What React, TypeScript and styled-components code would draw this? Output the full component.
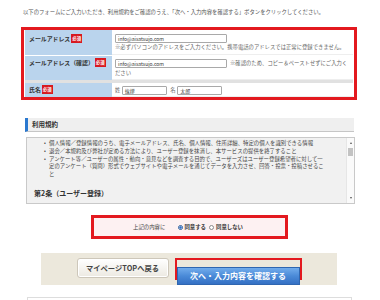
import React from "react";
import styled, { createGlobalStyle } from "styled-components";

const GlobalStyle = createGlobalStyle`
  html, body { margin: 0; padding: 0; background: #ffffff; }
  body { font-family: "Noto Sans CJK JP", "Noto Sans", sans-serif; }
  * { box-sizing: border-box; }
`;

const Page = styled.div`
  width: 380px;
  height: 300px;
  overflow: hidden;
  padding: 8px 23px 0 21px;
  font-family: "Noto Sans CJK JP", "Noto Sans", sans-serif;
`;

const Lead = styled.p`
  margin: 0 0 0 2px;
  font-size: 5.35px;
  line-height: 8px;
  color: #555;
  white-space: nowrap;
`;

const FormFrame = styled.div`
  margin-top: 11px;
  border: 3px solid #e3191f;
  padding: 0 1px;
  background: #fff;
`;

const FormRow = styled.div<{ $h: number; $sep?: "white" | "gray" }>`
  display: grid;
  grid-template-columns: 87px 1fr;
  height: ${(p) => p.$h}px;
  border-top: ${(p) =>
    p.$sep === "white" ? "1px solid #ffffff" : p.$sep === "gray" ? "3px solid #e1e1e1" : "none"};
`;

const LabelCell = styled.div<{ $pt: number }>`
  background: #bad4ed;
  padding: ${(p) => p.$pt}px 0 0 4px;
  font-size: 5.9px;
  font-weight: 700;
  line-height: 9px;
  color: #333;
  white-space: nowrap;
`;

const Badge = styled.span`
  display: inline-block;
  vertical-align: top;
  margin-left: 1px;
  height: 9px;
  padding: 0 1px;
  background: #d71920;
  color: #fff;
  font-size: 4.4px;
  line-height: 9px;
  font-weight: 700;
`;

const ValueCell = styled.div<{ $pt: number }>`
  background: #fff;
  padding: ${(p) => p.$pt}px 4px 0 3px;
  font-size: 5.35px;
  color: #666;
  border-bottom: 1px solid #eeeeee;
  line-height: 10px;
`;

const TextInput = styled.span<{ $w: number }>`
  display: inline-block;
  vertical-align: middle;
  width: ${(p) => p.$w}px;
  height: 9px;
  border: 1px solid #a9a9a9;
  border-radius: 1px;
  padding: 0 2px;
  background: #fff;
  font-size: 5px;
  line-height: 7px;
  color: #333;
  white-space: nowrap;
  overflow: hidden;
`;

const BlockInput = styled(TextInput)`
  display: block;
`;

const BlockNote = styled.div`
  margin-top: 1px;
  line-height: 7px;
  white-space: nowrap;
`;

const NameInput = styled(TextInput)`
  margin: 0 3.5px 0 1.5px;
`;

const InlineInput = styled(TextInput)`
  margin-right: 3px;
`;

const TermsHeader = styled.div`
  margin: 18px 3px 0 4px;
  height: 14px;
  background: #efefef;
  border-left: 3px solid #2a78cf;
  border-bottom: 1px solid #c6c6c6;
  padding-left: 4px;
  font-size: 6.5px;
  font-weight: 700;
  line-height: 13px;
  color: #333;
`;

const TermsBox = styled.div`
  margin: 5px 2px 0 5px;
  height: 67px;
  border: 1px solid #c9c9c9;
  background: #f1f1f1;
  display: flex;
  overflow: hidden;
`;

const TermsContent = styled.div`
  flex: 1;
  padding: 1.5px 0 0 7px;
  overflow: hidden;
`;

const TermsList = styled.ul`
  list-style: none;
  margin: 0 0 0 10px;
  padding: 0;
`;

const TermsItem = styled.li`
  display: flex;
  margin-bottom: 0.5px;
  font-size: 5.4px;
  line-height: 7.5px;
  color: #444;
`;

const Bullet = styled.span`
  flex: none;
  width: 5px;
`;

const TermsText = styled.span`
  width: 278px;
`;

const ArticleTitle = styled.h3`
  margin: 10px 0 0;
  font-size: 7px;
  line-height: 10px;
  font-weight: 700;
  color: #333;
`;

const ScrollBar = styled.div`
  flex: none;
  width: 8px;
  background: #fafafa;
  border-left: 1px solid #e6e6e6;
  display: flex;
  flex-direction: column;
  align-items: center;
  padding: 4px 0;
`;

const Arrow = styled.span<{ $up?: boolean }>`
  width: 0;
  height: 0;
  border-left: 1.5px solid transparent;
  border-right: 1.5px solid transparent;
  ${(p) => (p.$up ? "border-bottom: 2px solid #555;" : "border-top: 2px solid #555;")}
`;

const Thumb = styled.span`
  margin-top: 4px;
  width: 5px;
  height: 8px;
  background: #c3c3c3;
`;

const Spacer = styled.span`
  flex: 1;
`;

const AgreeBox = styled.div`
  margin: 11px auto 0;
  width: 197px;
  height: 24px;
  border: 3px solid #e3191f;
  background: #fdf1f2;
  display: flex;
  align-items: center;
  justify-content: center;
  font-size: 5.4px;
  color: #444;
  padding-right: 2px;
`;

const AgreeLabel = styled.span`
  margin-right: 12.5px;
`;

const Radio = styled.span<{ $checked?: boolean }>`
  display: inline-block;
  width: 5px;
  height: 5px;
  border-radius: 50%;
  border: 1px solid ${(p) => (p.$checked ? "#2f5f9a" : "#8a8a8a")};
  background: ${(p) => (p.$checked ? "radial-gradient(circle, #2b6fd0 0 45%, #ffffff 55%)" : "#ffffff")};
  margin-right: 1.5px;
`;

const RadioText = styled.span<{ $gap?: number }>`
  font-weight: 700;
  color: #333;
  margin-right: ${(p) => p.$gap ?? 0}px;
`;

const ButtonBar = styled.div`
  margin: 14px auto 0;
  width: 296px;
  height: 32px;
  background: #ece8dc;
  display: flex;
  justify-content: center;
  align-items: flex-start;
  gap: 6px;
  padding-top: 5px;
`;

const BackButton = styled.button`
  width: 92px;
  height: 20px;
  padding: 0;
  border: 1px solid #cdc7ba;
  border-radius: 3px;
  background: linear-gradient(#ffffff, #ece9e1);
  box-shadow: inset 0 0 0 1px #ffffff;
  font-family: "Noto Sans CJK JP", "Noto Sans", sans-serif;
  font-size: 7.3px;
  font-weight: 700;
  color: #444;
`;

const NextFrame = styled.div`
  width: 127px;
  height: 22px;
  border: 2px solid #e3191f;
`;

const NextButton = styled.button`
  width: 100%;
  height: 100%;
  padding: 0;
  border: 1px solid #2f66b0;
  background: linear-gradient(#72acec, #4a8ad8 50%, #3470c4);
  font-family: "Noto Sans CJK JP", "Noto Sans", sans-serif;
  font-size: 8px;
  font-weight: 700;
  color: #ffffff;
`;

const BottomBox = styled.div`
  margin: 12px 5px 0 6px;
  height: 20px;
  border: 1px solid #dddddd;
  border-bottom: none;
`;

const terms = [
  "個人情報／登録情報のうち、電子メールアドレス、氏名、個人情報、住所詳細、特定の個人を識別できる情報",
  "退会／本規約及び弊社が定める方法により、ユーザー登録を抹消し、本サービスの提供を終了すること",
  "アンケート等／ユーザーの属性・動向・意見などを調査する目的で、ユーザーズはユーザー登録希望者に対して一定のアンケート（質問）形式でウェブサイトや電子メールを通じてデータを入力させ、回答・投票・投稿させること",
];

export default function App() {
  return (
    <>
      <GlobalStyle />
      <Page>
        <Lead>
          以下のフォームにご入力いただき、利用規約をご確認のうえ、「次へ・入力内容を確認する」ボタンをクリックしてください。
        </Lead>

        <FormFrame>
          <FormRow $h={25}>
            <LabelCell $pt={4}>
              メールアドレス<Badge>必須</Badge>
            </LabelCell>
            <ValueCell $pt={4}>
              <BlockInput $w={112}>info@aisatsujo.com</BlockInput>
              <BlockNote>
                ※必ずパソコンのアドレスをご入力ください。携帯電話のアドレスでは正常に登録できません。
              </BlockNote>
            </ValueCell>
          </FormRow>
          <FormRow $h={25} $sep="white">
            <LabelCell $pt={2}>
              メールアドレス（確認）<Badge>必須</Badge>
            </LabelCell>
            <ValueCell $pt={2}>
              <InlineInput $w={112}>info@aisatsujo.com</InlineInput>
              <span>※確認のため、コピー＆ペーストせずにご入力く</span>
              <br />
              <span>ださい</span>
            </ValueCell>
          </FormRow>
          <FormRow $h={17} $sep="gray">
            <LabelCell $pt={2}>
              氏名<Badge>必須</Badge>
            </LabelCell>
            <ValueCell $pt={2}>
              姓<NameInput $w={45}>挨拶</NameInput>名<NameInput $w={45}>太郎</NameInput>
            </ValueCell>
          </FormRow>
        </FormFrame>

        <TermsHeader>利用規約</TermsHeader>
        <TermsBox>
          <TermsContent>
            <TermsList>
              {terms.map((t) => (
                <TermsItem key={t}>
                  <Bullet>•</Bullet>
                  <TermsText>{t}</TermsText>
                </TermsItem>
              ))}
            </TermsList>
            <ArticleTitle>第2条（ユーザー登録）</ArticleTitle>
          </TermsContent>
          <ScrollBar>
            <Arrow $up />
            <Thumb />
            <Spacer />
            <Arrow />
          </ScrollBar>
        </TermsBox>

        <AgreeBox>
          <AgreeLabel>上記の内容に</AgreeLabel>
          <Radio $checked />
          <RadioText $gap={3.5}>同意する</RadioText>
          <Radio />
          <RadioText>同意しない</RadioText>
        </AgreeBox>

        <ButtonBar>
          <BackButton>マイページTOPへ戻る</BackButton>
          <NextFrame>
            <NextButton>次へ・入力内容を確認する</NextButton>
          </NextFrame>
        </ButtonBar>

        <BottomBox />
      </Page>
    </>
  );
}
